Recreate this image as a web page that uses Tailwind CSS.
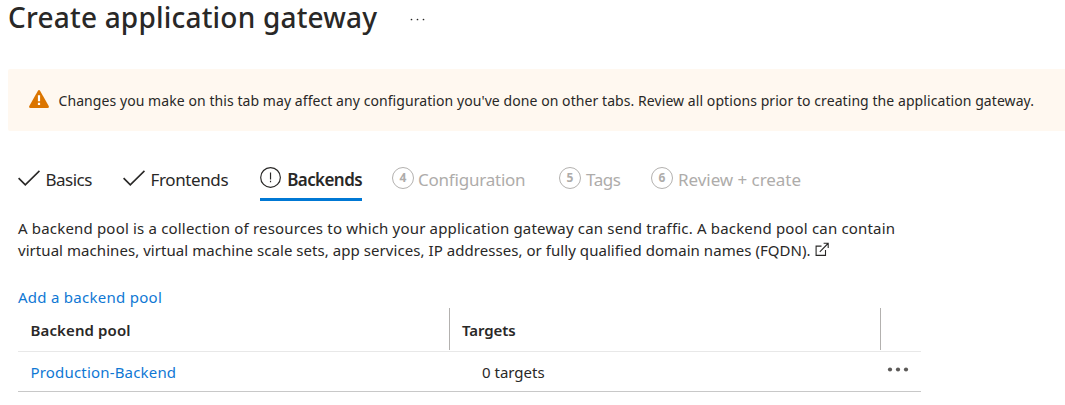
<!DOCTYPE html>
<html lang="en">
<head>
<meta charset="utf-8">
<title>Create application gateway</title>
<script src="https://cdn.jsdelivr.net/npm/@tailwindcss/browser@4"></script>
</head>
<body class="h-[405px] overflow-hidden bg-white pl-2 font-['Noto_Sans','Open_Sans',sans-serif] text-[15px] text-[#292827]">
  <header class="flex h-[69px] items-start">
    <h1 class="-ml-px w-[403px] whitespace-nowrap pl-px text-[28px] leading-[34px] font-medium tracking-[0.2px]">Create application gateway</h1>
    <svg class="mt-[18px] h-[3px] w-[15px]" viewBox="0 0 15 3" fill="#292827"><circle cx="1.5" cy="1.5" r=".85"/><circle cx="7.5" cy="1.5" r=".85"/><circle cx="13.5" cy="1.5" r=".85"/></svg>
  </header>

  <div class="flex h-[62px] items-start rounded-l-xs bg-[#fff8f0] pl-[21px]">
    <svg class="mt-[21px] mr-[9.5px] h-[18px] w-5 shrink-0" viewBox="0 0 20 18"><path d="M8.8.9Q10-.7 11.2.9L19.7 16Q20.4 18 18.6 18H1.4Q-.4 18 .3 16Z" fill="#db7500"/><path d="M8.9 5.3h2.2v6H8.9zM8.9 12.8h2.2v2.1H8.9z" fill="#fff"/></svg>
    <p class="mt-[22px] whitespace-nowrap text-[14px] leading-5 tracking-[0.07px]">Changes you make on this tab may affect any configuration you've done on other tabs. Review all options prior to creating the application gateway.</p>
  </div>

  <nav class="flex h-[86px] pt-[37px] pl-[10px] text-[17px] leading-6 whitespace-nowrap">
    <div class="flex w-[105px] items-start">
      <svg class="mt-[2px] mr-[5.5px] h-[17px] w-[22px]" viewBox="0 0 22 17" fill="none" stroke="#292827" stroke-width="1.7"><path d="M.6 8.2 7.3 14.9 21.5.9"/></svg>
      <span class="tracking-[-0.5px]">Basics</span>
    </div>
    <div class="flex w-[137px] items-start">
      <svg class="mt-[2px] mr-[5.5px] h-[17px] w-[22px]" viewBox="0 0 22 17" fill="none" stroke="#292827" stroke-width="1.7"><path d="M.6 8.2 7.3 14.9 21.5.9"/></svg>
      <span class="tracking-[-0.38px]">Frontends</span>
    </div>
    <div class="mr-[30px] flex h-[33px] w-[102px] items-start border-b-3 border-[#0078d4]">
      <svg class="-mt-[2px] mr-[5.5px] h-[22px] w-[22px]" viewBox="0 0 22 22" fill="none" stroke="#292827"><circle cx="10.7" cy="11.5" r="10" stroke-width="1.2"/><path d="M10.7 6.3v7.3M10.7 14.8v1.6" stroke-width="1.2"/></svg>
      <span class="font-semibold tracking-[-0.58px]">Backends</span>
    </div>
    <div class="flex w-[167px] items-start text-[#aeacaa]">
      <span class="-mt-px mr-1 flex size-[22px] items-center justify-center rounded-full border border-[#b3b1af] text-[12px] leading-none font-bold">4</span>
      <span class="tracking-[-0.22px]">Configuration</span>
    </div>
    <div class="flex w-[92px] items-start text-[#aeacaa]">
      <span class="-mt-px mr-[5px] flex size-[22px] items-center justify-center rounded-full border border-[#b3b1af] text-[12px] leading-none font-bold">5</span>
      <span class="tracking-[-0.45px]">Tags</span>
    </div>
    <div class="flex items-start text-[#aeacaa]">
      <span class="-mt-px mr-[5px] flex size-[22px] items-center justify-center rounded-full border border-[#b3b1af] text-[12px] leading-none font-bold">6</span>
      <span class="tracking-[-0.05px]">Review + create</span>
    </div>
  </nav>

  <main class="pl-[10px]">
    <p class="h-[69px] leading-[22px] whitespace-nowrap">
      <span class="block tracking-[0.178px]">A backend pool is a collection of resources to which your application gateway can send traffic. A backend pool can contain</span>
      <span class="flex items-start tracking-[0.055px]">virtual machines, virtual machine scale sets, app services, IP addresses, or fully qualified domain names (FQDN).
        <svg class="mt-[3px] ml-1 h-[15px] w-[15px]" viewBox="0 0 15 15" fill="none" stroke="#292827" stroke-width="1.1"><path d="M6.5 4.1H1.1V13.4H10.5V8M4.8 9.8 13 1.5M8.6 1.3H13.2V5.9"/></svg></span>
    </p>
    <a class="block h-[22px] leading-[22px] tracking-[0.27px] text-[#0f78d4]">Add a backend pool</a>

    <div class="w-[903px]">
      <div class="flex h-11 border-b border-[#e8e8e8] leading-[22px] font-semibold">
        <div class="h-[42px] w-[432px] border-r border-[#b3b1af] pt-[11px] pl-[12.5px] tracking-[0.12px]">Backend pool</div>
        <div class="h-[42px] w-[431px] border-r border-[#b3b1af] pt-[11px] pl-3 tracking-[-0.1px]">Targets</div>
      </div>
      <div class="flex h-10 border-b border-[#c8c8c8] leading-[22px]">
        <a class="w-[464px] pt-[9px] pl-[12.5px] tracking-[0.18px] text-[#0f78d4]">Production-Backend</a>
        <span class="w-[405px] pt-[9px]">0 targets</span>
        <svg class="mt-[15px] h-[5px] w-[22px]" viewBox="0 0 22 5" fill="#5c5a58"><circle cx="3" cy="2.5" r="2.1"/><circle cx="11" cy="2.5" r="2.1"/><circle cx="19" cy="2.5" r="2.1"/></svg>
      </div>
    </div>
  </main>
</body>
</html>
